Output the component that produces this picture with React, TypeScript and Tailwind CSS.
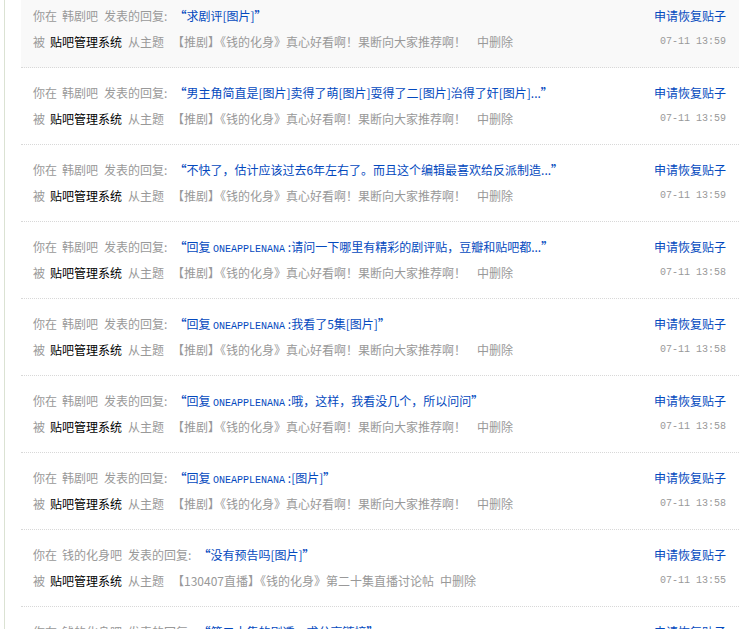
import React from "react";

type Reply = {
  bar: string;
  content: React.ReactNode;
  topic: string;
  time: string;
};

// latin user names render in the narrow mono face, like the old bitmap font
const Name = ({ children }: { children: React.ReactNode }) => (
  <span className="font-['Liberation_Mono','DejaVu_Sans_Mono',monospace] text-[10px]">
    {children}
  </span>
);

const replies: Reply[] = [
  {
    bar: "韩剧吧",
    content: "求剧评[图片]",
    topic: "【推剧】《钱的化身》真心好看啊！果断向大家推荐啊！",
    time: "07-11 13:59",
  },
  {
    bar: "韩剧吧",
    content: "男主角简直是[图片]卖得了萌[图片]耍得了二[图片]治得了奸[图片]...",
    topic: "【推剧】《钱的化身》真心好看啊！果断向大家推荐啊！",
    time: "07-11 13:59",
  },
  {
    bar: "韩剧吧",
    content: "不快了，估计应该过去6年左右了。而且这个编辑最喜欢给反派制造...",
    topic: "【推剧】《钱的化身》真心好看啊！果断向大家推荐啊！",
    time: "07-11 13:59",
  },
  {
    bar: "韩剧吧",
    content: (
      <>
        回复 <Name>ONEAPPLENANA</Name> :请问一下哪里有精彩的剧评贴，豆瓣和贴吧都...
      </>
    ),
    topic: "【推剧】《钱的化身》真心好看啊！果断向大家推荐啊！",
    time: "07-11 13:58",
  },
  {
    bar: "韩剧吧",
    content: (
      <>
        回复 <Name>ONEAPPLENANA</Name> :我看了5集[图片]
      </>
    ),
    topic: "【推剧】《钱的化身》真心好看啊！果断向大家推荐啊！",
    time: "07-11 13:58",
  },
  {
    bar: "韩剧吧",
    content: (
      <>
        回复 <Name>ONEAPPLENANA</Name> :哦，这样，我看没几个，所以问问
      </>
    ),
    topic: "【推剧】《钱的化身》真心好看啊！果断向大家推荐啊！",
    time: "07-11 13:58",
  },
  {
    bar: "韩剧吧",
    content: (
      <>
        回复 <Name>ONEAPPLENANA</Name> :[图片]
      </>
    ),
    topic: "【推剧】《钱的化身》真心好看啊！果断向大家推荐啊！",
    time: "07-11 13:58",
  },
  {
    bar: "钱的化身吧",
    content: "没有预告吗[图片]",
    topic: "【130407直播】《钱的化身》第二十集直播讨论帖",
    time: "07-11 13:55",
  },
  {
    bar: "钱的化身吧",
    content: "第二十集的剧透，求分享链接",
    topic: "【130407直播】《钱的化身》第二十集直播讨论帖",
    time: "07-11 13:54",
  },
];

function ReplyRow({ reply, active }: { reply: Reply; active: boolean }) {
  // a trailing full-width "！" leaves a wider gap before 中删除
  const wideGap = reply.topic.endsWith("！");
  return (
    <li
      className={`flex justify-between border-b border-dotted border-[#d8d8d8] pl-[12px] pr-[13px] pt-[17px] pb-[17px] ${
        active ? "bg-[#f9f9f9]" : ""
      }`}
    >
      <div className="flex flex-col gap-[10px] text-[#999]">
        <div className="h-4 leading-4 whitespace-nowrap">
          <span>你在</span>
          <span className="ml-[5px]">{reply.bar}</span>
          <span className="ml-[6px]">发表的回复:</span>
          <span className="ml-[7px] text-[#0449be]">
            <b>“</b>
            {reply.content}
            <b>”</b>
          </span>
        </div>
        <div className="h-4 leading-4 whitespace-nowrap">
          <span>被</span>
          <span className="ml-[5px] text-black">贴吧管理系统</span>
          <span className="ml-[6px]">从主题</span>
          <span className="ml-[8px]">{reply.topic}</span>
          <span className={wideGap ? "ml-[11px]" : "ml-[6px]"}>中删除</span>
        </div>
      </div>
      <div className="flex flex-col items-end gap-[10px]">
        <a href="#" className="h-4 leading-4 text-[#0449be] whitespace-nowrap">
          申请恢复贴子
        </a>
        <span className="h-4 leading-4 text-[#999] font-['Liberation_Mono','DejaVu_Sans_Mono',monospace] text-[10px]">
          {reply.time}
        </span>
      </div>
    </li>
  );
}

export default function App() {
  return (
    <div className="h-screen overflow-hidden bg-white flex font-['SimSun','Noto_Sans_CJK_SC',sans-serif] text-[12px]">
      <div className="ml-[4px] w-px bg-[#dbe2d3]" />
      <div className="flex-1 pl-[16px] pr-[4px]">
        <ul className="-mt-[9px]">
          {replies.map((r, i) => (
            <ReplyRow key={i} reply={r} active={i === 0} />
          ))}
        </ul>
      </div>
    </div>
  );
}
